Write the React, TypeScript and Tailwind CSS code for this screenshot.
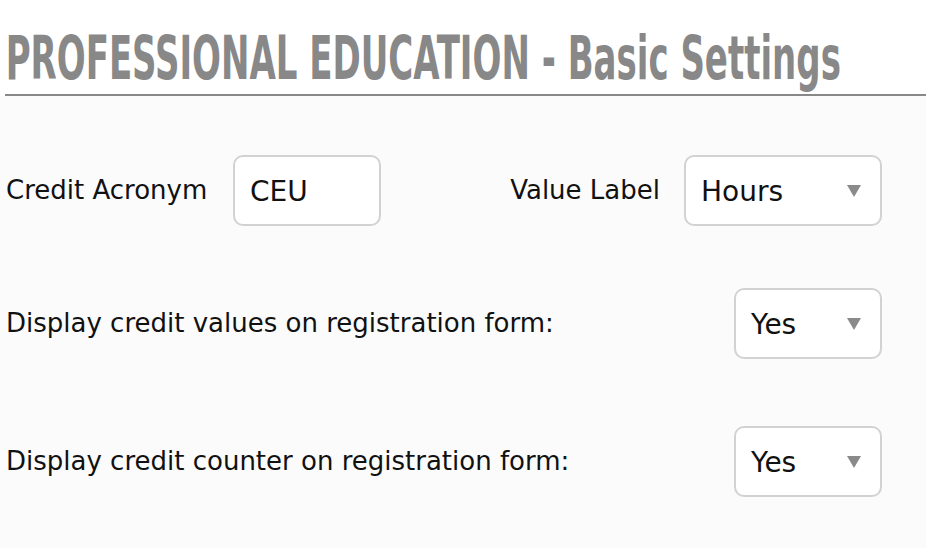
import React from "react";

function Caret() {
  return (
    <svg width="14" height="12" viewBox="0 0 14 12" className="shrink-0">
      <polygon points="0,0 14,0 7,12" fill="#8a8a8a" />
    </svg>
  );
}

function Select({ value, width }: { value: string; width: string }) {
  return (
    <div
      className={`${width} h-[71px] rounded-[10px] border-2 border-[#d2d2d2] bg-white flex items-center justify-between pl-[15px] pr-[19px] text-[28px] text-[#111]`}
    >
      <span className="pt-[3px]">{value}</span>
      <Caret />
    </div>
  );
}

export default function App() {
  return (
    <div
      className="w-[926px] h-[548px] bg-white overflow-hidden"
      style={{ fontFamily: '"DejaVu Sans", Verdana, sans-serif' }}
    >
      <div className="ml-[5px] border-b-2 border-[#888888] h-[96px] overflow-hidden">
        <h1
          className="text-[60px] font-bold leading-none text-[#888888] pt-[28px] pl-[1px] whitespace-nowrap origin-left scale-x-[0.63]"
          style={{ fontFamily: '"DejaVu Sans Condensed", "Liberation Sans", sans-serif' }}
        >
          PROFESSIONAL EDUCATION - Basic Settings
        </h1>
      </div>
      <div className="bg-[#fbfbfb] h-[452px] pl-[6px] pr-[44px] text-[26px] text-[#111]">
        <div className="flex items-center pt-[59px]">
          <span className="w-[227px]">Credit Acronym</span>
          <div className="w-[148px] h-[71px] rounded-[10px] border-2 border-[#d2d2d2] bg-white flex items-center pl-[15px] pt-[3px] text-[28px]">
            CEU
          </div>
          <span className="ml-auto mr-[24px]">Value Label</span>
          <Select value="Hours" width="w-[198px]" />
        </div>
        <div className="flex items-center justify-between mt-[62px]">
          <span>Display credit values on registration form:</span>
          <Select value="Yes" width="w-[148px]" />
        </div>
        <div className="flex items-center justify-between mt-[67px]">
          <span>Display credit counter on registration form:</span>
          <Select value="Yes" width="w-[148px]" />
        </div>
      </div>
    </div>
  );
}
